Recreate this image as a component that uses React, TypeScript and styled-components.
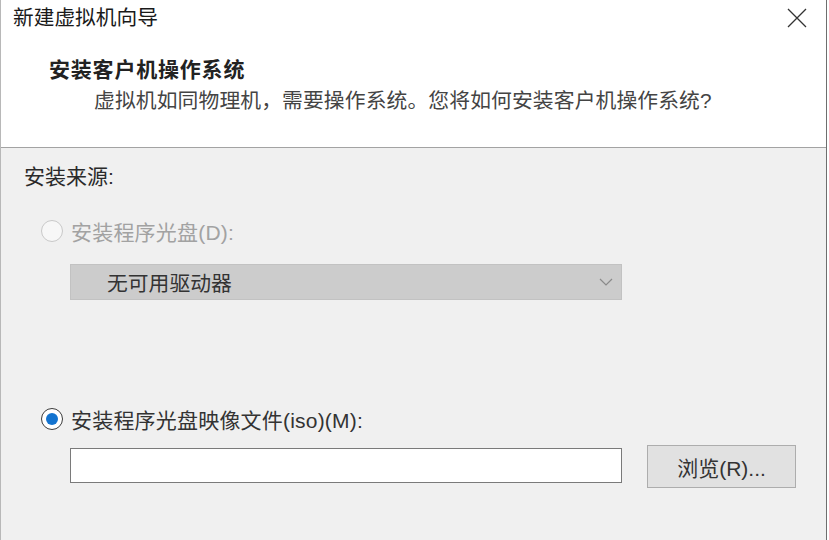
import React from "react";
import styled, { createGlobalStyle } from "styled-components";

const GlobalStyle = createGlobalStyle`
  html, body {
    margin: 0;
    padding: 0;
    background: #ffffff;
  }
  body {
    font-family: "Liberation Sans", "Noto Sans CJK SC", sans-serif;
    color: #1e1e1e;
  }
`;

const Window = styled.div`
  width: 827px;
  height: 540px;
  box-sizing: border-box;
  border-left: 1px solid #b8b8b8;
  border-right: 1px solid #6e6e6e;
  display: flex;
  flex-direction: column;
  background: #f0f0f0;
  overflow: hidden;
`;

const Header = styled.div`
  background: #ffffff;
  height: 148px;
  box-sizing: border-box;
  border-bottom: 1px solid #a3a3a3;
`;

const TitleBar = styled.div`
  height: 36px;
  display: flex;
  align-items: center;
  justify-content: space-between;
  padding: 0 19px 0 12px;
`;

const Title = styled.div`
  font-size: 20.7px;
  line-height: 36px;
  color: #1a1a1a;
`;

const Close = styled.div`
  width: 20px;
  height: 20px;
  display: flex;
  margin-top: -1px;
`;

const Heading = styled.div`
  margin: 20px 0 0 48px;
  font-size: 21px;
  letter-spacing: 0.8px;
  line-height: 28px;
  font-weight: 700;
  color: #222;
`;

const Subtitle = styled.div`
  margin: 3px 0 0 93px;
  font-size: 20.8px;
  letter-spacing: 0.1px;
  line-height: 28px;
  color: #444;
`;

const Body = styled.div`
  padding-left: 23px;
  display: flex;
  flex-direction: column;
`;

const Label = styled.div`
  margin-top: 15px;
  font-size: 21px;
  line-height: 28px;
  color: #2a2a2a;
`;

const RadioRow = styled.label<{ $top: number; $disabled?: boolean }>`
  margin-top: ${p => p.$top}px;
  margin-left: 17px;
  height: 28px;
  display: flex;
  align-items: center;
  gap: 8px;
  font-size: 21px;
  letter-spacing: 0.2px;
  color: ${p => (p.$disabled ? "#a2a2a2" : "#333")};
`;

const RadioCircle = styled.span<{ $checked?: boolean; $disabled?: boolean }>`
  width: 22px;
  height: 22px;
  box-sizing: border-box;
  border-radius: 50%;
  border: 1px solid
    ${p => (p.$disabled ? "#c9c9c9" : p.$checked ? "#3c3c3c" : "#333")};
  background: ${p => (p.$disabled ? "#f7f7f7" : "#fff")};
  display: flex;
  align-items: center;
  justify-content: center;
  flex: none;
  &::after {
    content: "";
    width: 12px;
    height: 12px;
    border-radius: 50%;
    background: ${p => (p.$checked ? "#1373cf" : "transparent")};
  }
`;

const Select = styled.div`
  margin: 19px 0 0 46px;
  width: 552px;
  height: 36px;
  box-sizing: border-box;
  background: #cccccc;
  border: 1px solid #c2c2c2;
  display: flex;
  align-items: center;
  justify-content: space-between;
  padding: 0 8px 0 36px;
  font-size: 20.8px;
  color: #333;
`;

const FileRow = styled.div`
  margin: 12px 0 0 46px;
  display: flex;
  align-items: center;
  gap: 25px;
`;

const PathInput = styled.input`
  width: 552px;
  height: 35px;
  box-sizing: border-box;
  border: 1px solid #7a7a7a;
  background: #fff;
  margin: -3px 0 0 0;
  outline: none;
`;

const Button = styled.button`
  width: 149px;
  height: 43px;
  box-sizing: border-box;
  background: #e1e1e1;
  border: 1px solid #adadad;
  font-family: "Liberation Sans", "Noto Sans CJK SC", sans-serif;
  font-size: 21px;
  color: #333;
  padding: 0;
`;

export default function App() {
  return (
    <>
      <GlobalStyle />
      <Window>
        <Header>
          <TitleBar>
            <Title>新建虚拟机向导</Title>
            <Close>
              <svg width="20" height="20" viewBox="0 0 20 20">
                <path
                  d="M1 1 L19 19 M19 1 L1 19"
                  stroke="#333"
                  strokeWidth="1.3"
                  fill="none"
                />
              </svg>
            </Close>
          </TitleBar>
          <Heading>安装客户机操作系统</Heading>
          <Subtitle>虚拟机如同物理机，需要操作系统。您将如何安装客户机操作系统?</Subtitle>
        </Header>
        <Body>
          <Label>安装来源:</Label>
          <RadioRow $top={26} $disabled>
            <RadioCircle $disabled />
            安装程序光盘(D):
          </RadioRow>
          <Select>
            <span>无可用驱动器</span>
            <svg width="14" height="8" viewBox="0 0 14 8">
              <path d="M1 1 L7 7 L13 1" stroke="#8a8a8a" strokeWidth="1.2" fill="none" />
            </svg>
          </Select>
          <RadioRow $top={105}>
            <RadioCircle $checked />
            安装程序光盘映像文件(iso)(M):
          </RadioRow>
          <FileRow>
            <PathInput />
            <Button>浏览(R)...</Button>
          </FileRow>
        </Body>
      </Window>
    </>
  );
}
